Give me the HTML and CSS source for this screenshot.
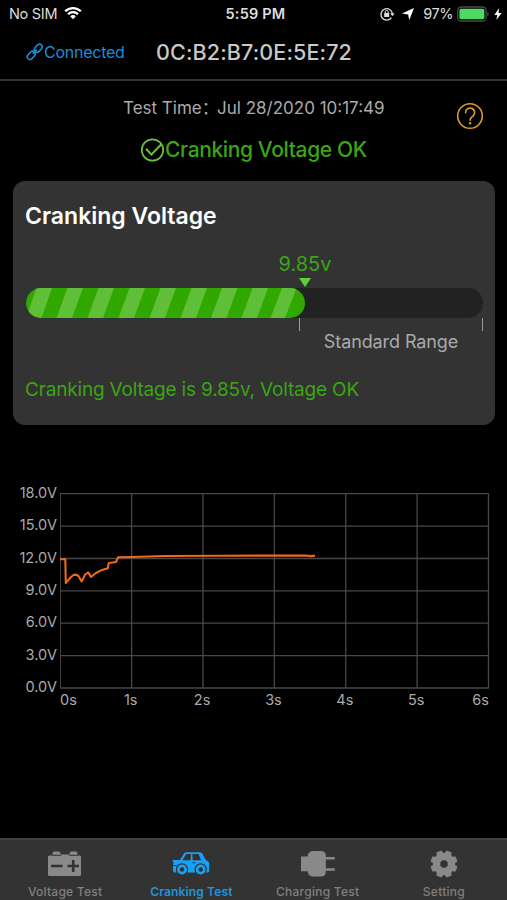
FILE: index.html
```html
<!DOCTYPE html>
<html lang="en">
<head>
<meta charset="utf-8">
<title>Cranking Test</title>
<link rel="stylesheet" href="styles.css">
</head>
<body>
<div class="app">
  <header class="status-bar">
    <div class="status-left">
      <span class="carrier">No SIM</span>
      <svg class="wifi" width="18" height="14" viewBox="0 0 18 14"><g fill="none" stroke="#fff" stroke-width="2.2"><path d="M1.2 5.3a11 11 0 0 1 15.6 0"/><path d="M4 8.2a7 7 0 0 1 10 0"/></g><path d="M9 13.2L6.2 10.3a4 4 0 0 1 5.6 0z" fill="#fff"/></svg>
    </div>
    <span class="clock">5:59 PM</span>
    <div class="status-right">
      <svg width="15" height="14" viewBox="0 0 15 14"><path d="M11.4 10.7A5.7 5.7 0 1 1 12.4 6.8" fill="none" stroke="#ddd" stroke-width="1.3"/><path d="M10.2 6.3h4.4l-2.2 2.9z" fill="#ddd"/><rect x="4.2" y="6" width="5" height="4" rx=".5" fill="#ddd"/><path d="M5.2 6.2V5a1.500 1.500 0 0 1 3 0v1.2" fill="none" stroke="#ddd"/></svg>
      <svg class="locate" width="12" height="12" viewBox="0 0 12 12"><path d="M12 0L7.300 12 6.100 6.400 0 5.400z" fill="#fff"/></svg>
      <span class="percent">97%</span>
      <svg class="battery" width="32" height="16" viewBox="0 0 32 16"><rect x=".7" y="1" width="28.4" height="14" rx="3.5" fill="none" stroke="#4b4b4b" stroke-width="1.3"/><rect x="2.4" y="2.8" width="25" height="10.4" rx="1.6" fill="#4cd964"/><path d="M30.3 5.6q1.4 1 1.4 2.4t-1.4 2.4z" fill="#4b4b4b"/></svg>
      <svg class="bolt" width="8" height="12" viewBox="0 0 8 12"><path d="M5.2 0L.4 6.9h2.9L2.3 12 7.6 4.9H4.5z" fill="#fff"/></svg>
    </div>
  </header>

  <nav class="title-bar">
    <div class="connection">
      <svg width="18" height="18" viewBox="0 0 18 18"><g fill="none" stroke="#1a8fd6" stroke-width="1.6"><rect x="-4.5" y="-2.7" width="9" height="5.4" rx="2.7" transform="translate(12.3 5.2) rotate(-48)"/><rect x="-4.5" y="-2.7" width="9" height="5.4" rx="2.7" transform="translate(5.2 12.4) rotate(-48)"/><path d="M6.7 10.7l4.1-4.1"/></g></svg>
      <span>Connected</span>
    </div>
    <h1 class="device">0C:B2:B7:0E:5E:72</h1>
  </nav>

  <section class="summary">
    <p class="test-time"><span class="time-label">Test Time：</span><span class="time-value">Jul 28/2020 10:17:49</span></p>
    <p class="verdict">
      <svg width="25" height="24" viewBox="0 0 25 24"><circle cx="12.5" cy="12" r="10.7" fill="none" stroke="#70bf3c" stroke-width="1.7"/><path d="M6 10.8l5.4 5.8L21.3 6.2" fill="none" stroke="#70bf3c" stroke-width="2"/></svg>
      <span>Cranking Voltage OK</span>
    </p>
    <svg class="help" width="28" height="28" viewBox="0 0 28 28"><circle cx="14" cy="14" r="12.3" fill="none" stroke="#d99a2b" stroke-width="1.6"/><path d="M9.600 10.600a4.500 4.500 0 1 1 7.600 3.200c-1.500 1.400-3.100 2.100-3.100 4.300" fill="none" stroke="#d99a2b" stroke-width="1.700" stroke-linecap="round"/><circle cx="14.1" cy="21.200" r="1.2" fill="#d99a2b"/></svg>
  </section>

  <section class="card">
    <h2 class="card-title">Cranking Voltage</h2>
    <div class="reading">
      <span class="reading-value">9.85v</span>
      <span class="pointer"></span>
    </div>
    <div class="track"><div class="fill"><svg width="279" height="30" viewBox="0 0 279 30"><g fill="#5fbf38"><path d="M10.500 0H26L15.500 30H0z"/><path d="M41.500 0H57L46 30H30.500z"/><path d="M72.500 0H88L77 30H61.500z"/><path d="M103.500 0H119L108 30H92.500z"/><path d="M134.500 0H150L139 30H123.500z"/><path d="M165.500 0H181L170 30H154.500z"/><path d="M196 0H211.500L200.500 30H185z"/><path d="M226.500 0H242L231 30H215.500z"/><path d="M256 0H270.500L259 30H244.500z"/></g></svg></div></div>
    <div class="range">Standard Range</div>
    <p class="result">Cranking Voltage is 9.85v, Voltage OK</p>
  </section>

  <section class="chart">
    <div class="y-axis"><span>18.0V</span><span>15.0V</span><span>12.0V</span><span>9.0V</span><span>6.0V</span><span>3.0V</span><span>0.0V</span></div>
    <div class="plot">
      <svg width="430" height="196" viewBox="0 0 430 196">
        <path d="M0 .7h429M0 33.1h429M0 65.5h429M0 97.8h429M0 130.2h429M0 162.600h429M0 195h429M.2 1v194M71.600 1v194M143 1v194M214.300 1v194M285.700 1v194M357.100 1v194M428.500 1v194" fill="none" stroke="#484848" stroke-width="1.3"/>
        <path d="M0 66.300H5.3L5.800 90L8 87.400L11 84L13.5 82L16 81.6L18.5 83L21.600 88.5L25.200 81.5L28.2 79.4L31 84L36 80L41 77.3L47.800 75.3L48.800 70L56 69L58 64.3L72 64L105 63L160 62.7L245 62.5L251 63.100L255 62.600" fill="none" stroke="#ee691e" stroke-width="2.1" stroke-linejoin="round"/>
      </svg>
      <div class="x-axis"><span>0s</span><span>1s</span><span>2s</span><span>3s</span><span>4s</span><span>5s</span><span>6s</span></div>
    </div>
  </section>

  <footer class="tabs">
    <div class="tab">
      <svg width="36" height="28" viewBox="0 0 36 28"><path d="M5.500 3.500q0-2 2-2h4q2 0 2 2v1h9v-1q0-2 2-2h4q2 0 2 2v2h2q1.500 0 1.500 1.500v17.500q0 1.500-1.500 1.500H2.500Q1 26 1 24.500V7q0-1.500 1.500-1.500h3z" fill="#898989"/><path d="M5 5.300h9M22 5.300h9" stroke="#333" stroke-width="1"/><path d="M4 16h11.500M20.500 16h11.500M26.200 10v12" stroke="#333" stroke-width="2.600"/></svg>
      <span>Voltage Test</span>
    </div>
    <div class="tab active">
      <svg width="40" height="28" viewBox="0 0 40 28"><path d="M8.800 10.300L13 3.600q.9-1.300 2.400-1.300H29q1.600 0 2.400 1.500l3.500 6.500q3.300 1 3.300 3.900v6.600q0 1.600-1.600 1.600H3.600Q2 22.400 2 20.800v-6.600q0-2.400 2.300-3z" fill="#1aa0f5"/><path d="M11.300 10.300L15.200 4h4.800l-.5 6.300zM21.700 10.300L21.300 4h6.200l2.600 6.300z" fill="#333"/><path d="M21.500 12.800h3M2 15.500h3.500" stroke="#333"/><g fill="#1aa0f5" stroke="#333" stroke-width="1.200"><circle cx="11" cy="19.500" r="5.600"/><circle cx="29.700" cy="19.500" r="5.600"/></g><g fill="#333"><circle cx="11" cy="19.500" r="2.200"/><circle cx="29.700" cy="19.500" r="2.200"/></g><path d="M1.800 11h7" stroke="#1aa0f5" stroke-width="2"/></svg>
      <span>Cranking Test</span>
    </div>
    <div class="tab">
      <svg width="36" height="28" viewBox="0 0 36 28"><path d="M1 6.500h6.500Q8.500 1 13 1h8q4.800 0 4.800 5v1h9v2.500h-9v8.800h9v2.500h-9v.7q0 5-4.800 5h-8q-4.500 0-5.500-5.200H1z" fill="#898989"/></svg>
      <span>Charging Test</span>
    </div>
    <div class="tab">
      <svg width="28" height="28" viewBox="-14 -14 28 28"><g fill="#898989"><circle r="11"/><path id="tooth" d="M-4-9.500L-2.500-13.500H2.500L4-9.500V9.500L2.500 13.500H-2.500L-4 9.500z" transform="rotate(22.500)"/><use href="#tooth" transform="rotate(45)"/><use href="#tooth" transform="rotate(90)"/><use href="#tooth" transform="rotate(135)"/></g><circle r="3.800" fill="#333"/></svg>
      <span>Setting</span>
    </div>
  </footer>
</div>
</body>
</html>
```
FILE: styles.css
```css
* { box-sizing: border-box; }
body { margin: 0; background: #000; font-family: Inter, "Noto Sans CJK SC", sans-serif; }
h1, h2, p { margin: 0; }
svg { display: block; flex: none; }
.app { width: 507px; height: 900px; display: flex; flex-direction: column; overflow: hidden; background: #000; color: #bbb; white-space: nowrap; }

.status-bar { height: 28px; display: grid; grid-template-columns: 1fr auto 1fr; align-items: center; padding: 0 5px 1px 9px; color: #ddd; font-size: 14.5px; }
.status-left, .status-right { display: flex; align-items: center; }
.carrier { letter-spacing: -.3px; }
.wifi { margin: -1px 0 0 7px; }
.clock { font-weight: 600; font-size: 14.5px; letter-spacing: .2px; }
.status-right { justify-content: flex-end; }
.locate { margin: 0 9px 0 7px; }
.percent { letter-spacing: -.5px; }
.battery { margin: 0 5px 0 4px; }

.title-bar { height: 53px; display: flex; align-items: center; padding: 0 0 3px 26px; border-bottom: 2px solid #333; }
.connection { width: 130px; display: flex; align-items: center; color: #1a8fd6; font-size: 16px; letter-spacing: -.25px; }
.device { font-size: 21.5px; font-weight: 500; color: #c8c8c8; letter-spacing: .12px; }

.summary { position: relative; height: 100px; padding-top: 16px; display: flex; flex-direction: column; }
.test-time { display: flex; height: 22px; line-height: 22px; padding-left: 123px; font-size: 17px; color: #aaa; }
.time-label { width: 94px; }
.verdict { display: flex; align-items: center; height: 26px; margin-top: 18px; padding-left: 140px; font-size: 21px; font-weight: 500; letter-spacing: -.38px; color: #3ca514; padding-bottom: 1px; }
.help { position: absolute; left: 456px; top: 21px; }

.card { margin: 0 12px 0 13px; height: 244px; padding: 20px 12px 0 13px; border-radius: 12px; background: #333; }
.card-title { height: 30px; line-height: 30px; margin-left: -1px; font-size: 23px; font-weight: 600; color: #fff; }
.reading { width: 104px; margin: 20px 0 0 227px; display: flex; flex-direction: column; align-items: center; }
.reading-value { height: 27px; line-height: 27px; font-size: 20px; color: #3ca514; }
.pointer { width: 12px; height: 9px; background: #5bd23c; clip-path: polygon(0 0, 100% 0, 50% 100%); }
.track { height: 30px; margin-top: 1px; border-radius: 15px; background: #222; }
.fill { width: 279px; height: 30px; border-radius: 15px; overflow: hidden; background: #30a800; }
.range { width: 184px; height: 13px; margin-left: 273px; border: solid #999; border-width: 0 1.5px; display: flex; justify-content: center; padding-top: 12px; line-height: 24px; font-size: 18px; letter-spacing: -.1px; color: #aaa; }
.result { height: 26px; margin: 46px 0 0 -1px; line-height: 26px; font-size: 19px; letter-spacing: -.18px; color: #3ca514; }

.chart { display: flex; height: 232px; margin-top: 58px; }
.y-axis { width: 60px; height: 214px; display: flex; flex-direction: column; justify-content: space-between; align-items: flex-end; padding-right: 3px; font-size: 14.5px; line-height: 20px; color: #aaa; }
.plot { width: 430px; padding-top: 10px; }
.x-axis { display: grid; grid-template-columns: 35px repeat(5, 71.4px) 37px; margin-top: 1px; line-height: 20px; font-size: 14.5px; color: #aaa; text-align: center; }
.x-axis span:first-child { text-align: left; }
.x-axis span:last-child { text-align: right; }

.tabs { display: grid; grid-template-columns: repeat(4, 1fr); height: 62px; margin-top: auto; padding: 10px 0 0 2px; border-top: 2px solid #444; background: #333; }
.tab { display: flex; flex-direction: column; align-items: center; font-size: 12px; font-weight: 500; letter-spacing: .25px; color: #808080; }
.tab span { line-height: 20px; margin-top: 4px; }
.active { color: #2494da; font-weight: 600; letter-spacing: .15px; }
```
